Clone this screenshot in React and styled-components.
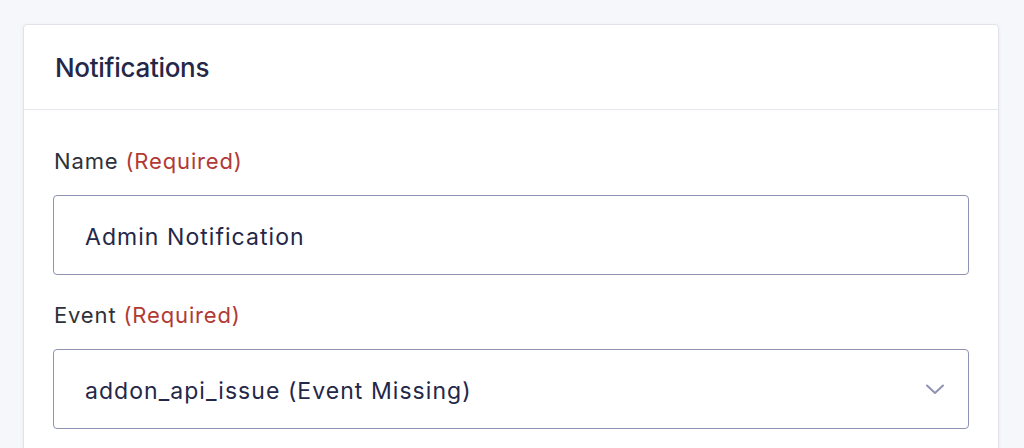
import React from "react";
import styled, { createGlobalStyle } from "styled-components";

const Global = createGlobalStyle`
  html, body { margin: 0; padding: 0; background: #f6f7fb; }
  body { font-family: Inter, "Noto Sans", sans-serif; -webkit-font-smoothing: antialiased; }
`;

const Page = styled.div`
  padding: 24px 25px 0 23px;
  height: 448px;
  box-sizing: border-box;
  overflow: hidden;
`;

const Card = styled.section`
  background: #fff;
  border: 1px solid #e1e2ea;
  border-radius: 4px;
  box-shadow: 0 1px 4px rgba(18, 25, 97, 0.05);
  min-height: 500px;
`;

const CardHeader = styled.header`
  height: 85px;
  box-sizing: border-box;
  padding: 0 31px;
  display: flex;
  align-items: center;
  border-bottom: 1px solid #e5e6ee;
`;

const Title = styled.h2`
  margin: 0;
  font-size: 26px;
  font-weight: 500;
  letter-spacing: -0.3px;
  color: #242748;
`;

const CardBody = styled.div`
  padding: 37px 29px 0;
  display: flex;
  flex-direction: column;
`;

const Field = styled.div`
  display: flex;
  flex-direction: column;
  & + & { margin-top: 26px; }
`;

const Label = styled.label`
  font-size: 22px;
  line-height: 28px;
  font-weight: 400;
  letter-spacing: 0.85px;
  color: #2f3139;
  margin-bottom: 20px;
  padding-left: 1px;
`;

const Required = styled.span`
  color: #b13a36;
`;

const Box = styled.div`
  height: 80px;
  box-sizing: border-box;
  border: 1px solid #9092b2;
  border-radius: 4px;
  display: flex;
  align-items: center;
  justify-content: space-between;
  padding: 3px 23px 0 31px;
  font-size: 23px;
  letter-spacing: 1.05px;
  color: #242748;
  background: #fff;
`;

const Chevron = styled.svg`
  width: 20px;
  height: 20px;
  flex: none;
  margin-top: -3px;
`;

export default function App() {
  return (
    <>
      <Global />
      <Page>
        <Card>
          <CardHeader>
            <Title>Notifications</Title>
          </CardHeader>
          <CardBody>
            <Field>
              <Label>
                Name <Required>(Required)</Required>
              </Label>
              <Box>Admin Notification</Box>
            </Field>
            <Field>
              <Label>
                Event <Required>(Required)</Required>
              </Label>
              <Box>
                addon_api_issue (Event Missing)
                <Chevron viewBox="0 0 20 20" fill="none">
                  <path d="M2 6.5l8 7.5 8-7.5" stroke="#9092b2" strokeWidth="2" strokeLinecap="round" strokeLinejoin="round" />
                </Chevron>
              </Box>
            </Field>
          </CardBody>
        </Card>
      </Page>
    </>
  );
}
